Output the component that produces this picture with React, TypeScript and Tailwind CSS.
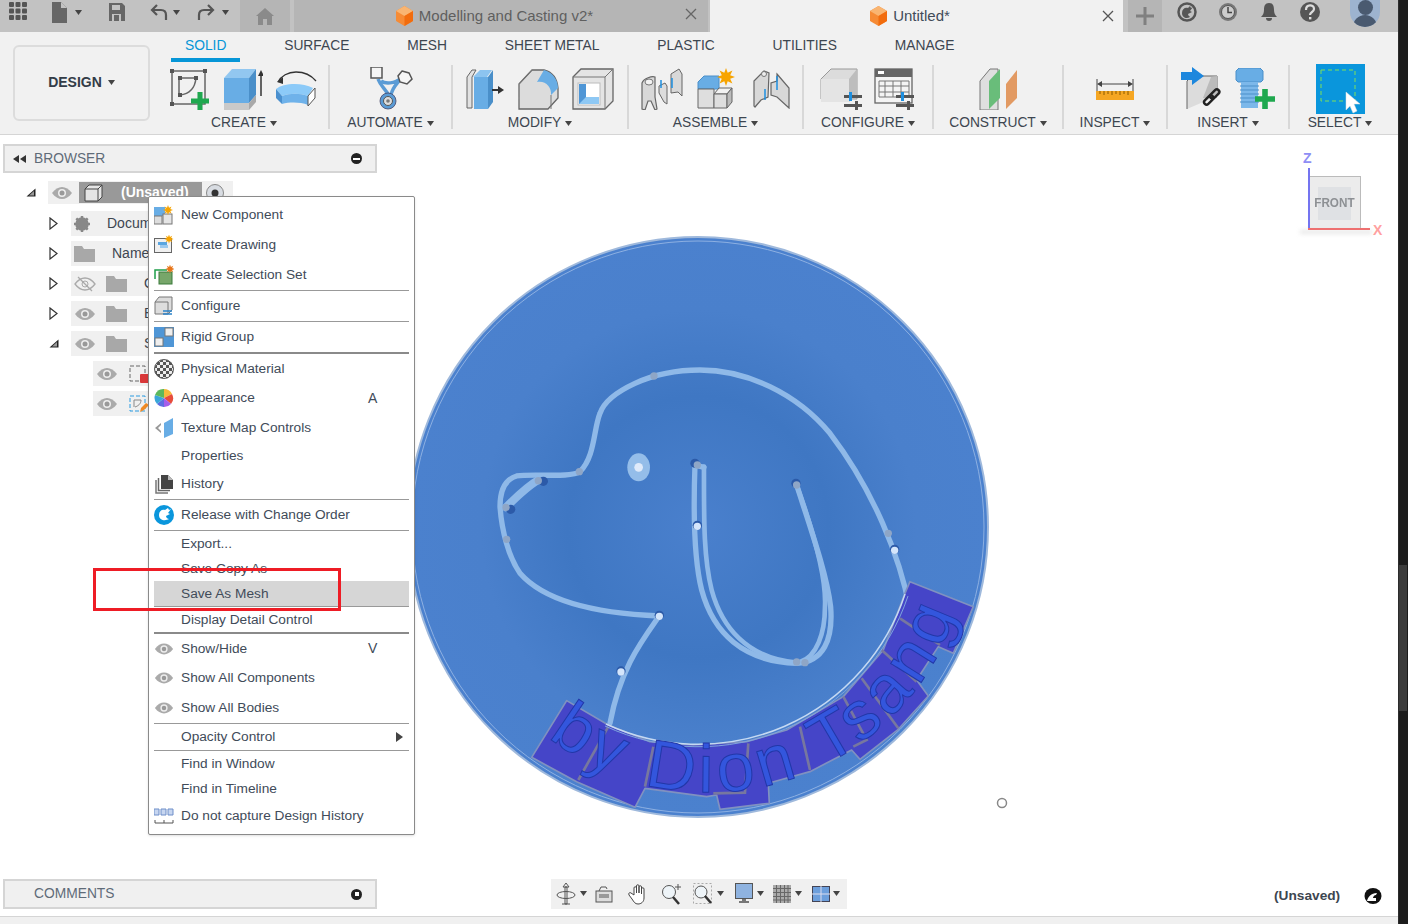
import React from 'react';

const Caret = ({ className = 'ml-1' }: { className?: string }) => (
  <svg width="7" height="5" viewBox="0 0 7 5" className={className}>
    <path d="M0 0h7L3.5 5z" fill="#444" />
  </svg>
);

const Eye = ({ className = '' }: { className?: string }) => (
  <svg width="22" height="14" viewBox="0 0 22 14" className={className}>
    <path d="M1 7c3-4 6.500-6 10-6s7 2 10 6c-3 4-6.500 6-10 6S4 11 1 7z" fill="#aaa" />
    <circle cx="11" cy="7" r="4" fill="#eee" />
    <circle cx="11" cy="7" r="2.500" fill="#999" />
  </svg>
);

const Folder = () => (
  <svg width="21" height="16" viewBox="0 0 21 16" className="flex-none">
    <path d="M0 0h8l2 3h11v13H0z" fill="#a8a8a8" />
  </svg>
);

const OrangeCube = () => (
  <svg width="19" height="20" viewBox="0 0 19 20">
    <path d="M9.500 0L18 5v10l-8.500 5L1 15V5z" fill="#f68b35" />
    <path d="M9.500 0L18 5l-8.500 5L1 5z" fill="#f9b572" />
    <path d="M9.500 10L18 5v10l-8.500 5z" fill="#f26c0d" />
  </svg>
);

const Spark = ({ x, y, r, fill = '#f7a400' }: { x: number; y: number; r: number; fill?: string }) => {
  const pts: string[] = [];
  for (let i = 0; i < 16; i++) {
    const rad = i % 2 === 0 ? r : r * 0.5;
    const a = (i * Math.PI) / 8;
    pts.push(`${(x + rad * Math.cos(a)).toFixed(1)},${(y + rad * Math.sin(a)).toFixed(1)}`);
  }
  return <polygon points={pts.join(' ')} fill={fill} />;
};

const GreenPlus = ({ x, y, s = 18 }: { x: number; y: number; s?: number }) => (
  <path
    d={`M${x} ${y + s * 0.36}h${s * 0.36}v${-s * 0.36}h${s * 0.28}v${s * 0.36}h${s * 0.36}v${s * 0.28}h${-s * 0.36}v${s * 0.36}h${-s * 0.28}v${-s * 0.36}h${-s * 0.36}z`}
    fill="#1fa84f"
  />
);

const Sliders = ({ x, y }: { x: number; y: number }) => (
  <g>
    <rect x={x} y={y + 3} width="18" height="3" fill="#555" />
    <rect x={x} y={y + 12} width="18" height="3" fill="#555" />
    <rect x={x + 5} y={y} width="3" height="9" fill="#1d8fe0" />
    <rect x={x + 11} y={y + 9} width="3" height="9" fill="#555" />
  </g>
);

/* ribbon icons */
const SketchIcon = () => (
  <svg width="42" height="42" viewBox="0 0 42 42">
    <rect x="3" y="3" width="33" height="33" fill="none" stroke="#666" strokeWidth="1.500" />
    {[[1, 1], [34, 1], [1, 34]].map(([a, b]) => (
      <rect key={a * 100 + b} x={a} y={b} width="4" height="4" fill="#555" />
    ))}
    <path d="M10 10h16M10 10v17M11 27c9-1 15-7 16-17" fill="none" stroke="#666" strokeWidth="1.500" />
    <rect x="9" y="8" width="4" height="4" fill="#555" />
    <rect x="25" y="8" width="4" height="4" fill="#555" />
    <rect x="9" y="25" width="4" height="4" fill="#555" />
    <GreenPlus x={22} y={24} />
  </svg>
);

const ExtrudeIcon = () => (
  <svg width="40" height="42" viewBox="0 0 40 42">
    <path d="M1 10L9 1h24l-7 9z" fill="#92c7f0" />
    <path d="M1 10h25v25H1z" fill="#68ade5" />
    <path d="M26 10l7-9v26l-7 8z" fill="#4a8fc9" />
    <path d="M1 35h25v7H1z" fill="#c9c9c9" />
    <path d="M26 35l7-8v7l-7 8z" fill="#a9a9a9" />
    <path d="M38 28V5" stroke="#333" strokeWidth="1.500" />
    <path d="M35 8l3-6 3 6z" fill="#333" />
  </svg>
);

const RevolveIcon = () => (
  <svg width="44" height="42" viewBox="0 0 44 42">
    <path d="M3 14c3-6 10-10 18-10s15 3 20 9" fill="none" stroke="#333" strokeWidth="1.300" />
    <path d="M2 14l6-5v7z" fill="#333" />
    <path d="M1 21c7-6 26-7 37-1l-5 8c-8-3-18-3-26 0z" fill="#8ccaf8" />
    <path d="M1 21l6 7v8l-6-6z" fill="#4a90cf" />
    <path d="M7 28c8-3 18-3 26 0v9c-8-3-18-3-26-1z" fill="#6fb2ea" />
    <path d="M33 28l7-8v10l-7 8z" fill="#fff" stroke="#555" />
  </svg>
);

const AutomateIcon = () => (
  <svg width="44" height="44" viewBox="0 0 44 44">
    <path d="M9 12c3 8 8 10 11 17M33 9c-3 7-9 9-11 19M12 14c4 3 14 3 20-3" fill="none" stroke="#5a9bd5" strokeWidth="3.500" />
    <rect x="2" y="0" width="11" height="11" fill="#f5f5f5" stroke="#555" strokeWidth="1.500" />
    <path d="M33 4l7 2 3 6-5 5-7-2-2-6z" fill="#f5f5f5" stroke="#555" strokeWidth="1.500" />
    <circle cx="19" cy="34" r="8" fill="#5a9bd5" stroke="#446" strokeWidth=".8" />
    <circle cx="19" cy="34" r="4.500" fill="#ddd" stroke="#555" />
    <circle cx="19" cy="34" r="1.800" fill="#777" />
  </svg>
);

const PressPullIcon = () => (
  <svg width="40" height="42" viewBox="0 0 40 42">
    <path d="M1 9l5-7h4L6 9v31H1z" fill="#e2e2e2" stroke="#666" />
    <path d="M7 9l7-7h12l-5 7z" fill="#8cc4f0" />
    <path d="M8 9h14v32H8z" fill="#68ade5" />
    <path d="M22 9l5-7v32l-5 7z" fill="#4a8fc9" />
    <path d="M26 22h8" stroke="#333" strokeWidth="2" />
    <path d="M32 18l6 4-6 4z" fill="#333" />
  </svg>
);

const FilletIcon = () => (
  <svg width="42" height="42" viewBox="0 0 42 42">
    <path d="M1 16L14 2h12c8 2 13 8 14 18v10l-10 11H1z" fill="#dcdcdc" stroke="#666" strokeWidth="1.300" />
    <path d="M19 14c8-2 15 5 14 13l7-7c0-9-6-16-14-18z" fill="#68ade5" />
    <path d="M14 2L1 16M33 27v14" stroke="#777" />
  </svg>
);

const ShellIcon = () => (
  <svg width="42" height="42" viewBox="0 0 42 42">
    <path d="M1 9l8-8h32v32l-8 8H1z" fill="#e4e4e4" stroke="#666" strokeWidth="1.300" />
    <path d="M33 9v32M33 9l8-8M33 9H1" stroke="#777" />
    <rect x="6" y="15" width="22" height="22" fill="#fff" stroke="#bbb" />
    <path d="M7 16h7v13h13v7H7z" fill="#4f96d6" />
    <path d="M14 29h13v7H7z" fill="#8ec8f4" />
  </svg>
);

const JointPart = ({ x, y }: { x: number; y: number }) => (
  <g transform={`translate(${x} ${y})`}>
    <path d="M1 8c2-5 10-7 13-6v20l2 12-2 1-4-9H7l-3 9-3-1z" fill="#d8d8d8" stroke="#666" strokeWidth="1.200" />
    <ellipse cx="8" cy="7" rx="4" ry="3" fill="#f2f2f2" stroke="#777" />
  </g>
);

const AsBuiltJointIcon = () => (
  <svg width="42" height="42" viewBox="0 0 42 42">
    <JointPart x={0} y={7} />
    <path d="M18 18l6-3 2 3v18l-3-2-5-9z" fill="#dcdcdc" stroke="#666" />
    <path d="M30 6l8-5 3 5v22l-4-4-7 1z" fill="#d8d8d8" stroke="#666" />
    <path d="M20 12v8M31 10v10" stroke="#1d8fe0" strokeWidth="1.500" />
  </svg>
);

const NewComponentIcon = () => (
  <svg width="42" height="42" viewBox="0 0 42 42">
    <path d="M1 14l6-6h15v13H1z" fill="#68ade5" stroke="#4a8fc9" />
    <path d="M1 21h16v19H1z" fill="#dedede" stroke="#666" />
    <path d="M17 26l5-6h13l-5 6z" fill="#f2f2f2" stroke="#666" />
    <path d="M17 26h13v14H17z" fill="#dedede" stroke="#666" />
    <path d="M30 26l5-6v14l-5 6z" fill="#bbb" stroke="#666" />
    <Spark x={29} y={9} r={9} />
  </svg>
);

const JointIcon = () => (
  <svg width="38" height="40" viewBox="0 0 38 40">
    <path d="M1 12L11 2l5 2-1 24-7 3-6 7-1-1z" fill="#d8d8d8" stroke="#666" strokeWidth="1.200" />
    <circle cx="11" cy="5" r="2.500" fill="#eee" stroke="#777" />
    <path d="M24 5l12 14v20l-12-11-6-2V14l6-2z" fill="#d8d8d8" stroke="#666" strokeWidth="1.200" />
    <path d="M12 20v11M24 7v14" stroke="#1d8fe0" strokeWidth="1.500" />
  </svg>
);

const ConfigCubeIcon = () => (
  <svg width="42" height="42" viewBox="0 0 42 42">
    <path d="M1 11l10-10h26v30H1z" fill="#dcdcdc" stroke="#999" />
    <path d="M1 11h28v23H1z" fill="#e4e4e4" />
    <path d="M29 11l8-10v24l-8 9z" fill="#bdbdbd" />
    <Sliders x={24} y={24} />
  </svg>
);

const ConfigTableIcon = () => (
  <svg width="42" height="42" viewBox="0 0 42 42">
    <rect x="1" y="1" width="37" height="34" fill="#f4f4f4" stroke="#666" strokeWidth="1.300" />
    <rect x="1" y="1" width="37" height="8" fill="#666" />
    <rect x="4" y="3" width="6" height="3" fill="#fff" />
    <path d="M5 13h30v16H5zM5 18h30M5 24h30M11 13v16M19 13v16M27 13v16" fill="none" stroke="#777" />
    <Sliders x={22} y={24} />
  </svg>
);

const ConstructIcon = () => (
  <svg width="38" height="42" viewBox="0 0 38 42">
    <path d="M1 13L11 1h8v41H1z" fill="#dfdfdf" stroke="#777" />
    <path d="M10 13L21 1v29L10 41z" fill="#69bd7a" />
    <path d="M27 16L38 2v28L27 41z" fill="#e29a63" />
  </svg>
);

const InspectIcon = () => (
  <svg width="38" height="22" viewBox="0 0 38 22">
    <path d="M1 1v12M37 1v12" stroke="#444" />
    <path d="M3 6h32" stroke="#444" />
    <path d="M1 6l5-3v6zM37 6l-5-3v6z" fill="#444" />
    <rect x="0" y="13" width="38" height="9" fill="#f5a623" />
    <path d="M4 13v3M8 13v4M12 13v3M16 13v4M20 13v3M24 13v4M28 13v3M32 13v4" stroke="#8a5a00" />
  </svg>
);

const InsertIcon = () => (
  <svg width="42" height="44" viewBox="0 0 42 44">
    <path d="M6 42V14l5-5h25v20" fill="#dcdcdc" stroke="#666" />
    <path d="M30 10l6-1v22H22" fill="#bbb" />
    <path d="M0 5h11V0l12 9-12 9v-5H0z" fill="#1d87dd" />
    <rect x="22" y="31" width="11" height="5" rx="2.500" transform="rotate(-45 27 33)" fill="none" stroke="#222" strokeWidth="2.400" />
    <rect x="28" y="25" width="11" height="5" rx="2.500" transform="rotate(-45 33 27)" fill="none" stroke="#222" strokeWidth="2.400" />
  </svg>
);

const BoltIcon = () => (
  <svg width="40" height="42" viewBox="0 0 40 42">
    <path d="M1 3l3-3h21l3 3v9l-2 2H3l-2-2z" fill="#68ade5" stroke="#4a8fc9" />
    <path d="M6 14h17v26H6z" fill="#7cb8ea" />
    <path d="M5 18h19M5 22h19M5 26h19M5 30h19M5 34h19" stroke="#4a8fc9" />
    <GreenPlus x={20} y={21} s={20} />
  </svg>
);

const SelectIcon = () => (
  <svg width="49" height="50" viewBox="0 0 49 50">
    <rect width="49" height="50" fill="#0a96dc" />
    <rect x="5" y="6" width="34" height="31" fill="none" stroke="#7ee05a" strokeDasharray="4 3" />
    <path d="M30 28l0 18 4-4 3 7 4-2-3-7h6z" fill="#fff" stroke="#ddd" strokeWidth=".5" />
  </svg>
);

const ribbonTabs = ['SOLID', 'SURFACE', 'MESH', 'SHEET METAL', 'PLASTIC', 'UTILITIES', 'MANAGE'];

const RibbonGroup = ({
  label,
  width,
  gap = 'gap-[12px]',
  children,
  last,
}: {
  label: string;
  width: string;
  gap?: string;
  children: React.ReactNode;
  last?: boolean;
}) => (
  <div className={`${width} h-[64px] flex flex-col items-center ${last ? '' : 'border-r-2 border-[#d8d8d8]'}`}>
    <div className={`h-[47px] flex-none flex items-center justify-center ${gap}`}>{children}</div>
    <div className="mt-[1px] flex-none flex items-center text-[13.8px] leading-[18px] text-[#3d4650] pt-px">
      {label}
      <Caret />
    </div>
  </div>
);

/* context menu icons */
const MenuCube = () => (
  <svg width="20" height="20" viewBox="0 0 20 20">
    <path d="M1 6l4-5h13v13l-4 4H1z" fill="#ddd" stroke="#777" />
    <path d="M1 6h13v12" fill="none" stroke="#777" />
    <path d="M9 15h9M9 18h9" stroke="#2a83c9" strokeWidth="1.300" />
  </svg>
);

const menuIcons: Record<string, React.ReactNode> = {
  component: (
    <svg width="20" height="20" viewBox="0 0 20 20">
      <rect x="0" y="2" width="11" height="9" fill="#68ade5" />
      <rect x="0" y="11" width="8" height="8" fill="#ddd" stroke="#777" />
      <rect x="9" y="9" width="9" height="10" fill="#e5e5e5" stroke="#777" />
      <Spark x={14} y={5} r={5} />
    </svg>
  ),
  drawing: (
    <svg width="20" height="20" viewBox="0 0 20 20">
      <rect x="0.500" y="3.500" width="17" height="14" fill="#f0f0f0" stroke="#666" />
      <rect x="4" y="7" width="9" height="3" fill="#5aa5e0" />
      <rect x="6" y="10" width="8" height="3" fill="#9cc9ee" />
      <Spark x={15} y={4} r={4.500} />
    </svg>
  ),
  selection: (
    <svg width="20" height="20" viewBox="0 0 20 20">
      <path d="M1 14V5h12" fill="none" stroke="#1e9e4a" strokeWidth="1.500" />
      <rect x="5" y="7" width="13" height="12" fill="#77a66a" stroke="#3b7a3b" />
      <Spark x={16} y={4} r={4.500} fill="#e8761a" />
    </svg>
  ),
  configure: <MenuCube />,
  rigid: (
    <svg width="20" height="20" viewBox="0 0 20 20">
      <rect width="20" height="20" fill="#4f96d6" />
      <rect x="11" y="1" width="8" height="8" fill="#eee" stroke="#777" />
      <rect x="1" y="11" width="8" height="8" fill="#eee" stroke="#777" />
    </svg>
  ),
  material: (
    <svg width="20" height="20" viewBox="0 0 20 20">
      <defs>
        <pattern id="checker" width="6" height="6" patternUnits="userSpaceOnUse">
          <rect width="6" height="6" fill="#eee" />
          <rect width="3" height="3" fill="#555" />
          <rect x="3" y="3" width="3" height="3" fill="#555" />
        </pattern>
      </defs>
      <circle cx="10" cy="10" r="9.500" fill="url(#checker)" stroke="#555" />
    </svg>
  ),
  appearance: (
    <svg width="20" height="20" viewBox="0 0 20 20">
      <path d="M10 10V1a9 9 0 0 1 8 5z" fill="#f6b93b" />
      <path d="M10 10l8-4a9 9 0 0 1-1 10z" fill="#e74c3c" />
      <path d="M10 10l7 6a9 9 0 0 1-7 3z" fill="#a55eea" />
      <path d="M10 10v9a9 9 0 0 1-7-3z" fill="#5b6ee1" />
      <path d="M10 10l-7 6a9 9 0 0 1-2-9z" fill="#3aa6d9" />
      <path d="M10 10L1 7a9 9 0 0 1 9-6z" fill="#5cb85c" />
    </svg>
  ),
  texture: (
    <svg width="20" height="20" viewBox="0 0 20 20">
      <path d="M1 10l6-5v2L4 10l3 3v2z" fill="#999" />
      <path d="M10 5l9-5v16l-9 4z" fill="#68ade5" />
    </svg>
  ),
  history: (
    <svg width="20" height="20" viewBox="0 0 20 20">
      <path d="M2 6v13h12" fill="none" stroke="#777" strokeWidth="1.500" />
      <path d="M4.500 4v12.500H16" fill="none" stroke="#666" strokeWidth="1.500" />
      <path d="M7 1h7l5 5v9H7z" fill="#444" />
      <path d="M14 1v5h5z" fill="#bbb" />
    </svg>
  ),
  release: (
    <svg width="20" height="20" viewBox="0 0 20 20">
      <circle cx="10" cy="10" r="10" fill="#0a96dc" />
      <path d="M5 10c0-4 3-6 6-5l3-2 1 2 2-1-3 4 2 1-4 2c0 2 2 3 3 3-3 2-10 2-10-4z" fill="#fff" />
    </svg>
  ),
  eye: <Eye className="w-[20px]" />,
  capture: (
    <svg width="20" height="18" viewBox="0 0 20 18">
      <path d="M0 2h5v6H0zM7 2h5v6H7zM14 2h5v6h-5z" fill="#c7d6f0" stroke="#6f8fc9" />
      <path d="M1 13v3h18v-3M10 13v3" fill="none" stroke="#555" />
    </svg>
  ),
};

type MenuEntry =
  | { kind: 'sep'; thick?: boolean }
  | { label: string; height: string; icon?: string; shortcut?: string; submenu?: boolean; active?: boolean; kind?: 'item' };

const menuEntries: MenuEntry[] = [
  { label: 'New Component', height: 'h-[30px]', icon: 'component' },
  { label: 'Create Drawing', height: 'h-[30px]', icon: 'drawing' },
  { label: 'Create Selection Set', height: 'h-[30px]', icon: 'selection' },
  { kind: 'sep' },
  { label: 'Configure', height: 'h-[30px]', icon: 'configure' },
  { kind: 'sep' },
  { label: 'Rigid Group', height: 'h-[30px]', icon: 'rigid' },
  { kind: 'sep', thick: true },
  { label: 'Physical Material', height: 'h-[29px]', icon: 'material' },
  { label: 'Appearance', height: 'h-[30px]', icon: 'appearance', shortcut: 'A' },
  { label: 'Texture Map Controls', height: 'h-[30px]', icon: 'texture' },
  { label: 'Properties', height: 'h-[26px]' },
  { label: 'History', height: 'h-[30px]', icon: 'history' },
  { kind: 'sep' },
  { label: 'Release with Change Order', height: 'h-[30px]', icon: 'release' },
  { kind: 'sep' },
  { label: 'Export...', height: 'h-[25px]' },
  { label: 'Save Copy As', height: 'h-[25px]' },
  { label: 'Save As Mesh', height: 'h-[25px]', active: true },
  { kind: 'sep' },
  { label: 'Display Detail Control', height: 'h-[25px]' },
  { kind: 'sep', thick: true },
  { label: 'Show/Hide', height: 'h-[29px]', icon: 'eye', shortcut: 'V' },
  { label: 'Show All Components', height: 'h-[30px]', icon: 'eye' },
  { label: 'Show All Bodies', height: 'h-[30px]', icon: 'eye' },
  { kind: 'sep' },
  { label: 'Opacity Control', height: 'h-[26px]', submenu: true },
  { kind: 'sep' },
  { label: 'Find in Window', height: 'h-[25px]' },
  { label: 'Find in Timeline', height: 'h-[25px]' },
  { label: 'Do not capture Design History', height: 'h-[30px]', icon: 'capture' },
];

const ContextMenu = () => (
  <div className="absolute left-[148px] top-[61px] w-[267px] h-[639px] z-10 bg-white border border-[#8a8a8a] rounded-[2px] px-[5px] pt-[3px] shadow-sm">
    {menuEntries.map((entry, i) => {
      if (entry.kind === 'sep') {
        return <div key={i} className={entry.thick ? 'h-[2px] bg-[#8a8a8a]' : 'h-px bg-[#999]'} />;
      }
      const item = entry as Exclude<MenuEntry, { kind: 'sep' }>;
      return (
        <div
          key={i}
          className={`${item.height} flex items-center text-[13.7px] text-[#414b59] ${item.active ? 'bg-[#d6d6d6]' : ''}`}
        >
          <span className="w-[27px] flex-none flex items-center">{item.icon ? menuIcons[item.icon] : null}</span>
          <span className="flex-1 pt-px">{item.label}</span>
          {item.shortcut && <span className="w-[41px] flex-none text-[14px]">{item.shortcut}</span>}
          {item.submenu && (
            <svg width="7" height="10" viewBox="0 0 7 10" className="mr-[6px]">
              <path d="M0 0l7 5-7 5z" fill="#444" />
            </svg>
          )}
        </div>
      );
    })}
  </div>
);

const Triangle = ({ open }: { open?: boolean }) =>
  open ? (
    <svg width="10" height="9" viewBox="0 0 10 9">
      <path d="M9.500 0.500v8H0.500z" fill="#222" />
      <path d="M8 3v4.500H3z" fill="#999" />
    </svg>
  ) : (
    <svg width="9" height="13" viewBox="0 0 9 13">
      <path d="M1 1l7 5.500L1 12z" fill="#fff" stroke="#333" strokeWidth="1.200" />
    </svg>
  );

const PanelHeader = ({
  title,
  height,
  children,
  symbol,
}: {
  title: string;
  height: string;
  children?: React.ReactNode;
  symbol: string;
}) => (
  <div className={`w-[374px] ${height} flex-none flex items-center bg-[#f0f0f0] border-2 border-[#d5d5d5] text-[13.8px] text-[#5f6b78]`}>
    <span className="w-[29px] flex justify-center">{children}</span>
    <span className="flex-1 pt-px">{title}</span>
    <span className="w-[11px] h-[11px] mr-[13px] rounded-full bg-[#222] flex items-center justify-center">
      <span className={symbol} />
    </span>
  </div>
);

const TreeRow = ({ open, children }: { open?: boolean; children: React.ReactNode }) => (
  <div className="h-[25px] flex items-center mb-[5px] ml-[46px]">
    <span className="w-[22px] flex-none">
      <Triangle open={open} />
    </span>
    <div className="w-[79px] h-[25px] flex items-center bg-[#f0f0f0] overflow-hidden whitespace-nowrap">{children}</div>
  </div>
);

const BrowserTree = () => (
  <div className="mt-[8px] text-[14px] text-[#3d4650]">
    <div className="h-[23px] flex items-center ml-[23px] mb-[7px]">
      <span className="w-[22px] flex-none">
        <Triangle open />
      </span>
      <div className="h-[23px] w-[185px] flex items-center bg-[#f0f0f0]">
        <Eye className="ml-[3px] mr-[6px]" />
        <div className="w-[123px] h-[21px] flex items-center bg-[#999] text-white font-bold">
          <svg width="20" height="18" viewBox="0 0 20 18" className="ml-[5px] mr-[17px]">
            <path d="M1 5l4-4h13v12l-4 4H1z" fill="#e5e5e5" stroke="#444" />
            <path d="M1 5h13v12M14 5l4-4" fill="none" stroke="#444" />
          </svg>
          (Unsaved)
        </div>
        <svg width="20" height="20" viewBox="0 0 20 20" className="ml-[3px]">
          <circle cx="10" cy="10" r="8.500" fill="#d8dce2" stroke="#888" />
          <circle cx="10" cy="10" r="3.500" fill="#333" />
        </svg>
      </div>
    </div>
    <TreeRow>
      <svg width="16" height="16" viewBox="0 0 16 16" className="ml-[3px] mr-[17px] flex-none">
        <circle cx="8" cy="8" r="5" fill="none" stroke="#888" strokeWidth="3.500" />
        <path d="M8 0v16M0 8h16M2.300 2.300l11.400 11.400M13.700 2.300L2.300 13.700" stroke="#888" strokeWidth="2.500" />
      </svg>
      Document Settings
    </TreeRow>
    <TreeRow>
      <span className="ml-[3px] mr-[17px]">
        <Folder />
      </span>
      Named Views
    </TreeRow>
    <TreeRow>
      <svg width="22" height="16" viewBox="0 0 22 16" className="ml-[3px] mr-[10px] flex-none">
        <path d="M1 8c3-4 6.500-6 10-6s7 2 10 6c-3 4-6.500 6-10 6S4 12 1 8z" fill="none" stroke="#aaa" strokeWidth="1.300" />
        <circle cx="11" cy="8" r="3" fill="none" stroke="#aaa" />
        <path d="M4 1l14 14" stroke="#aaa" strokeWidth="1.300" />
      </svg>
      <Folder />
      <span className="ml-[17px]">Origin</span>
    </TreeRow>
    <TreeRow>
      <Eye className="ml-[3px] mr-[10px] flex-none" />
      <Folder />
      <span className="ml-[17px]">Bodies</span>
    </TreeRow>
    <TreeRow open>
      <Eye className="ml-[3px] mr-[10px] flex-none" />
      <Folder />
      <span className="ml-[17px]">Sketches</span>
    </TreeRow>
    <div className="h-[25px] w-[55px] flex items-center mb-[5px] ml-[90px] bg-[#f0f0f0] overflow-hidden">
      <Eye className="ml-[3px] mr-[10px] flex-none" />
      <svg width="22" height="20" viewBox="0 0 22 20" className="flex-none">
        <rect x="2" y="2" width="15" height="15" fill="none" stroke="#666" strokeDasharray="4 2" />
        <rect x="12" y="10" width="9" height="9" rx="1" fill="#d9383a" />
      </svg>
    </div>
    <div className="h-[25px] w-[55px] flex items-center ml-[90px] bg-[#f0f0f0] overflow-hidden">
      <Eye className="ml-[3px] mr-[10px] flex-none" />
      <svg width="22" height="20" viewBox="0 0 22 20" className="flex-none">
        <rect x="2" y="2" width="15" height="15" fill="none" stroke="#2a9be0" strokeDasharray="4 2" />
        <path d="M6 6h7M6 6v7M7 13c3-1 6-3 6-7" fill="none" stroke="#888" />
        <path d="M12 18l1-4 5-5 3 2-5 5z" fill="#f08a24" />
      </svg>
    </div>
  </div>
);

/* the model drawn in the canvas, page coordinates */
const Model = () => (
  <svg className="absolute inset-0" width="1398" height="781" viewBox="0 135 1398 781">
    <defs>
      <radialGradient id="disc" cx="50%" cy="50%" r="50%">
        <stop offset="0%" stopColor="#4a80cd" />
        <stop offset="45%" stopColor="#3f77c3" />
        <stop offset="75%" stopColor="#4a80cc" />
        <stop offset="100%" stopColor="#4b81ce" />
      </radialGradient>
      <path id="nameArc" d="M548 737A260 260 0 0 0 963 585" fill="none" />
    </defs>
    <circle cx="698" cy="527" r="290" fill="url(#disc)" stroke="#9fb9dc" strokeWidth="2" />
    <circle cx="698" cy="527" r="286" fill="none" stroke="#8db0e2" strokeWidth="1" />

    <g transform="translate(480 350) scale(.3333)" fill="none" stroke="#8fb9e8" strokeWidth="16" strokeLinecap="round" strokeLinejoin="round">
      <path d="M1290 780C1260 620 1180 420 1050 250C950 130 800 60 660 60C590 60 520 75 465 100C400 130 370 160 360 190C340 240 345 320 300 365C270 385 160 370 110 378C70 390 60 430 60 470C65 540 85 620 120 670C190 750 330 790 538 798" />
      <path d="M538 798C480 880 420 960 390 1120" />
      <path d="M78 472C110 440 140 410 175 390" strokeWidth="24" />
      <path d="M645 345L672 352" />
      <path d="M645 345C640 480 640 620 665 720C700 850 790 935 950 940C1030 935 1060 870 1052 770C1040 670 990 530 950 405" />
      <path d="M672 350C672 500 670 620 695 720C725 830 800 925 950 938" strokeWidth="14" />
      <path d="M950 405C995 530 1040 680 1035 770C1035 850 1010 920 960 936" strokeWidth="14" />
      <ellipse cx="476" cy="352" rx="34" ry="42" fill="#94bde9" stroke="none" />
      <circle cx="476" cy="352" r="13" fill="#dfeafa" stroke="none" />
      {[[538, 798], [423, 965], [652, 528], [1244, 600]].map(([x, y]) => (
        <g key={x}>
          <circle cx={x} cy={y - 2} r="14" fill="#2c5aa8" stroke="none" />
          <circle cx={x} cy={y + 1} r="11" fill="#d4e5fb" stroke="none" />
        </g>
      ))}
      {[[645, 340], [948, 400], [190, 394], [92, 478]].map(([x, y]) => (
        <circle key={x} cx={x} cy={y} r="14" fill="#2c5aa8" stroke="none" />
      ))}
      {[[175, 392], [78, 472], [80, 568], [298, 365], [522, 78], [950, 405], [652, 345], [1225, 550], [950, 936], [975, 938]].map(([x, y]) => (
        <circle key={x + y} cx={x} cy={y} r="11" fill="#8fa6c6" stroke="none" />
      ))}
    </g>

    <g transform="translate(500 570) scale(.3333)">
      <polygon
        points="200,392 325,465 450,515 580,525 740,515 860,480 1030,380 1150,240 1215,70 1230,35 1420,110 1360,250 1315,230 1250,330 1285,378 1195,478 1080,568 1055,540 930,605 805,640 808,700 660,718 650,675 620,680 435,655 405,712 230,635 95,562"
        fill="#4545c8"
        stroke="#8091c0"
        strokeWidth="5"
        strokeLinejoin="round"
      />
      <g stroke="#77779f" strokeWidth="8" fill="none">
        <path d="M325 470L235 630M460 530L435 650M745 520L735 668L640 670M900 470L930 600M1030 380L1100 510L1060 530M1085 325L1195 475M1145 240L1250 335M1200 145L1320 225" />
      </g>
    </g>
    <path d="M606 724A218 218 0 0 0 905 594" fill="none" stroke="#c5d9f2" strokeWidth="1.500" />
    <path d="M605 726A221 221 0 0 0 908 596" fill="none" stroke="#7fa5dd" strokeWidth="1" />
    <text fontFamily="'Liberation Sans', Arial, sans-serif" fontSize="68" fill="#3356dd" stroke="#2237a8" strokeWidth="1">
      <textPath href="#nameArc" textLength="498">by Dion Tsang</textPath>
    </text>
    <circle cx="1002" cy="803" r="4.500" fill="#fff" stroke="#888" strokeWidth="1.500" />
  </svg>
);

const ViewCube = () => (
  <div className="absolute left-[1300px] top-[13px] w-[84px] h-[92px]">
    <span className="absolute left-[3px] top-0 text-[14px] font-bold text-[#8e8ef5]">Z</span>
    <div className="absolute left-[8px] top-[28px] w-[53px] h-[53px] bg-[#ececec] border-t border-r border-[#bbb] flex items-center justify-center">
      <div className="w-[33px] h-[33px] bg-[#dfe1e4] flex items-center justify-center">
        <span className="text-[13px] font-bold text-[#8d9094] scale-x-90">FRONT</span>
      </div>
    </div>
    <div className="absolute left-0 top-[82px] w-[72px] h-[4px] bg-[#e8e8e8] blur-[2px]" />
    <div className="absolute left-[8px] top-[20px] w-[2px] h-[61px] bg-[#7474f0]" />
    <div className="absolute left-[8px] top-[80px] w-[62px] h-[2px] bg-[#ee7070]" />
    <span className="absolute left-[73px] top-[72px] text-[14px] font-bold text-[#ffa0a0]">X</span>
  </div>
);

const NavBar = () => (
  <div className="w-[296px] h-[30px] flex items-center pl-[5px] bg-[#f0f0f0] mt-[-1px]">
    <svg width="20" height="24" viewBox="0 0 20 24" fill="none" stroke="#555">
      <path d="M10 1l-3 4h6zM9 5h2v17H9zM6 22h8" />
      <ellipse cx="10" cy="13" rx="9" ry="3.500" />
    </svg>
    <Caret className="ml-[4px] mr-[8px]" />
    <svg width="18" height="18" viewBox="0 0 18 18">
      <rect x="1" y="6" width="16" height="11" fill="#ddd" stroke="#555" />
      <rect x="4" y="9" width="10" height="4" fill="#999" />
      <path d="M4 6l2-4h5l1 2" fill="none" stroke="#555" />
    </svg>
    <svg width="22" height="22" viewBox="0 0 22 22" fill="#fff" stroke="#444" className="ml-[15px]">
      <path d="M6 12V5a1.200 1.200 0 0 1 2.500 0v5V3a1.200 1.200 0 0 1 2.500 0v7V4a1.200 1.200 0 0 1 2.500 0v7V6a1.200 1.200 0 0 1 2.500 0v9c0 4-3 6-6 6s-4-2-6-5l-3-4c-1-2 1-3 2-2z" />
    </svg>
    <svg width="22" height="22" viewBox="0 0 22 22" fill="none" className="ml-[10px]">
      <circle cx="9" cy="9" r="6.500" fill="#eef4f8" stroke="#555" />
      <path d="M13 14l6 7" stroke="#333" strokeWidth="2.500" />
      <path d="M18 1v6M15 4h6" stroke="#555" />
    </svg>
    <svg width="22" height="22" viewBox="0 0 22 22" fill="none" className="ml-[11px]">
      <rect x="0.500" y="0.500" width="18" height="20" stroke="#aaa" strokeDasharray="2 2" />
      <circle cx="8" cy="9" r="6" fill="#eef4f8" stroke="#555" />
      <path d="M12 13l6 7" stroke="#333" strokeWidth="2.500" />
    </svg>
    <Caret className="ml-[2px] mr-[11px]" />
    <svg width="18" height="21" viewBox="0 0 18 21">
      <rect x="0.500" y="0.500" width="17" height="15" fill="#8fb3e0" stroke="#555" />
      <path d="M7 16h4v2h3v2H4v-2h3z" fill="#777" />
    </svg>
    <Caret className="ml-[4px] mr-[9px]" />
    <svg width="18" height="18" viewBox="0 0 18 18">
      <rect width="18" height="18" fill="#aaa" />
      <path d="M3.500 0v18M7.500 0v18M11.500 0v18M15 0v18M0 3.500h18M0 7.500h18M0 11.500h18M0 15h18" stroke="#666" />
    </svg>
    <Caret className="ml-[4px] mr-[10px]" />
    <svg width="18" height="16" viewBox="0 0 18 16">
      <rect x="0.500" y="0.500" width="17" height="15" fill="#6d9fdc" stroke="#445" />
      <path d="M9 0v16M0 8h18" stroke="#dde" />
    </svg>
    <Caret className="ml-[3px]" />
  </div>
);

const TitleBar = () => (
  <div className="h-[32px] flex-none flex bg-[#c2c2c2]">
    <div className="flex items-start w-[240px] pl-[9px] pt-[2px]">
      <svg width="18" height="18" viewBox="0 0 18 18" fill="#555">
        {[0, 6.500, 13].map(a =>
          [0, 6.500, 13].map(b => <rect key={`${a}-${b}`} x={a} y={b} width="5" height="5" rx="1" />),
        )}
      </svg>
      <svg width="17" height="21" viewBox="0 0 17 21" className="ml-[24px]">
        <path d="M1 0h9l6 6v15H1z" fill="#666" />
        <path d="M10 0v6h6z" fill="#c2c2c2" />
      </svg>
      <Caret className="ml-[7px] mt-[8px]" />
      <svg width="17" height="18" viewBox="0 0 17 18" className="ml-[26px] mt-px">
        <path d="M1 0h13l3 3v15H1z" fill="#666" />
        <rect x="4" y="2" width="8" height="5" fill="#c2c2c2" />
        <rect x="4" y="11" width="9" height="7" fill="#c2c2c2" />
        <rect x="6" y="12" width="5" height="6" fill="#666" />
      </svg>
      <svg width="18" height="17" viewBox="0 0 18 17" fill="none" stroke="#555" strokeWidth="2.200" className="ml-[25px] mt-[2px]">
        <path d="M16 16V11c0-3-2-5-5-5H3" />
        <path d="M7 1L2 6l5 5" />
      </svg>
      <Caret className="ml-[5px] mt-[8px]" />
      <svg width="18" height="17" viewBox="0 0 18 17" fill="none" stroke="#555" strokeWidth="2.200" className="ml-[17px] mt-[2px]">
        <path d="M2 16V11c0-3 2-5 5-5h8" />
        <path d="M11 1l5 5-5 5" />
      </svg>
      <Caret className="ml-[7px] mt-[8px]" />
    </div>
    <div className="w-[50px] flex items-center justify-center bg-[#b5b5b5]">
      <svg width="18" height="18" viewBox="0 0 18 18">
        <path d="M9 1l9 8h-2v9h-5v-6H7v6H2V9H0z" fill="#8a8a8a" />
      </svg>
    </div>
    <div className="ml-[4px] w-[414px] relative flex items-center justify-center gap-[5px] bg-[#b5b5b5] text-[15px] text-[#5f5f5f] pr-[14px]">
      <OrangeCube />
      Modelling and Casting v2*
      <span className="absolute left-[391px] top-[8px] text-[#666]">
        <svg width="12" height="12" viewBox="0 0 12 12" stroke="currentColor" strokeWidth="1.300">
          <path d="M1 1l10 10M11 1L1 11" />
        </svg>
      </span>
    </div>
    <div className="ml-[2px] w-[413px] relative flex items-center justify-center gap-[5px] bg-[#f1f1f1] text-[15px] text-[#414b59] pr-[14px]">
      <OrangeCube />
      Untitled*
      <span className="absolute left-[392px] top-[10px] text-[#555]">
        <svg width="12" height="12" viewBox="0 0 12 12" stroke="currentColor" strokeWidth="1.300">
          <path d="M1 1l10 10M11 1L1 11" />
        </svg>
      </span>
    </div>
    <div className="ml-[5px] w-[34px] flex items-center justify-center bg-[#b5b5b5]">
      <svg width="18" height="18" viewBox="0 0 18 18">
        <path d="M7.500 0h3v7.500H18v3h-7.500V18h-3v-7.500H0v-3h7.500z" fill="#808080" />
      </svg>
    </div>
    <div className="flex-1 flex items-start pt-[2px] pl-[15px] relative">
      <svg width="20" height="20" viewBox="0 0 20 20">
        <circle cx="10" cy="10" r="8.500" fill="#c2c2c2" stroke="#555" strokeWidth="2.500" />
        <path d="M5 11c0-4 3-6 6-5l2-2 1 2 2-1-3 4 2 1-4 2c0 2 2 2 2 3-3 2-8 1-8-4z" fill="#555" />
      </svg>
      <svg width="20" height="20" viewBox="0 0 20 20" className="ml-[21px]">
        <circle cx="10" cy="10" r="9" fill="#777" />
        <circle cx="10" cy="10" r="6.500" fill="#ccc" stroke="#555" />
        <path d="M10 5v5.500h4" fill="none" stroke="#444" strokeWidth="1.500" />
      </svg>
      <svg width="18" height="20" viewBox="0 0 18 20" className="ml-[22px]">
        <path d="M9 1c4 0 5 3 5 7 0 3 1 5 3 7H1c2-2 3-4 3-7 0-4 1-7 5-7z" fill="#555" />
        <path d="M6 16h6c0 2-1 3-3 3s-3-1-3-3z" fill="#555" />
      </svg>
      <svg width="20" height="20" viewBox="0 0 20 20" className="ml-[22px]">
        <circle cx="10" cy="10" r="10" fill="#555" />
        <path d="M6 8c0-6 8-6 8-1 0 3-4 3-4 6" fill="none" stroke="#ddd" strokeWidth="2.200" />
        <rect x="9" y="15" width="2.400" height="2.400" fill="#ddd" />
      </svg>
      <div className="absolute left-[188px] top-0 w-[30px] h-[27px] rounded-b-full overflow-hidden bg-[#9db3cf]">
        <div className="mx-auto w-[15px] h-[15px] rounded-full bg-[#4a5a70]" />
        <div className="mx-auto w-[24px] h-[12px] rounded-t-full bg-[#4a5a70]" />
      </div>
    </div>
  </div>
);

const Ribbon = () => (
  <div className="h-[103px] flex-none flex bg-[#f1f1f1] border-b border-[#d5d5d5]">
    <div className="ml-[13px] mt-[13px] pb-[2px] w-[137px] h-[76px] flex items-center justify-center border-2 border-[#dcdcdc] rounded-[6px] text-[14px] font-bold text-[#333c47]">
      DESIGN
      <Caret className="ml-[6px]" />
    </div>
    <div className="ml-[10px] flex-1 flex flex-col">
      <div className="h-[30px] flex gap-[29.8px] pl-[11px] text-[13.8px] leading-[18px] text-[#3d4650]">
        {ribbonTabs.map(tab => (
          <div
            key={tab}
            className={`h-[30px] px-[14px] pt-[5px] border-b-4 ${tab === 'SOLID' ? 'text-[#0696d7] border-[#0696d7]' : 'border-transparent'}`}
          >
            {tab}
          </div>
        ))}
      </div>
      <div className="mt-[3px] flex">
        <RibbonGroup label="CREATE" width="w-[170px]">
          <SketchIcon />
          <ExtrudeIcon />
          <RevolveIcon />
        </RibbonGroup>
        <RibbonGroup label="AUTOMATE" width="w-[123px]">
          <AutomateIcon />
        </RibbonGroup>
        <RibbonGroup label="MODIFY" width="w-[176px]">
          <PressPullIcon />
          <FilletIcon />
          <ShellIcon />
        </RibbonGroup>
        <RibbonGroup label="ASSEMBLE" width="w-[175px]" gap="gap-[14px]">
          <AsBuiltJointIcon />
          <NewComponentIcon />
          <JointIcon />
        </RibbonGroup>
        <RibbonGroup label="CONFIGURE" width="w-[130px]">
          <ConfigCubeIcon />
          <ConfigTableIcon />
        </RibbonGroup>
        <RibbonGroup label="CONSTRUCT" width="w-[130px]">
          <ConstructIcon />
        </RibbonGroup>
        <RibbonGroup label="INSPECT" width="w-[104px]">
          <InspectIcon />
        </RibbonGroup>
        <RibbonGroup label="INSERT" width="w-[122px]">
          <InsertIcon />
          <BoltIcon />
        </RibbonGroup>
        <RibbonGroup label="SELECT" width="w-[100px]" last>
          <SelectIcon />
        </RibbonGroup>
      </div>
    </div>
  </div>
);

const App: React.FC = () => {
  return (
    <div className="w-[1408px] h-[924px] flex overflow-hidden bg-white font-['Liberation_Sans',Arial,sans-serif]">
      <div className="w-[1398px] flex flex-col">
        <TitleBar />
        <Ribbon />
        <div className="relative flex-1 flex flex-col pl-[3px] pt-[9px] pb-[7px]">
          <Model />
          <ViewCube />
          <div className="relative flex-1 flex flex-col">
            <PanelHeader title="BROWSER" height="h-[29px]" symbol="w-[7px] h-[2px] bg-white">
              <svg width="13" height="8" viewBox="0 0 13 8">
                <path d="M6 0v8L0 4zM13 0v8L7 4z" fill="#333" />
              </svg>
            </PanelHeader>
            <BrowserTree />
            <div className="mt-auto flex items-center">
              <PanelHeader title="COMMENTS" height="h-[30px]" symbol="w-[4px] h-[4px] bg-white" />
              <div className="ml-[174px]">
                <NavBar />
              </div>
              <span className="ml-[427px] mt-[4px] text-[13.7px] font-bold text-[#3d4650]">(Unsaved)</span>
              <svg width="18" height="16" viewBox="0 0 18 16" className="ml-[24px] mt-[4px]">
                <ellipse cx="9" cy="8" rx="8.500" ry="8" fill="#111" />
                <path d="M3 13c1-4 4-8 10-8l-1 2c-2 0-3 2-3 3h3v3z" fill="#fff" />
              </svg>
            </div>
          </div>
          <ContextMenu />
          <div className="absolute left-[93px] top-[433px] w-[248px] h-[43px] z-20 border-[3px] border-[#ee1c25]" />
        </div>
        <div className="h-[8px] flex-none bg-[#f0f0f0] border-t border-[#d5d5d5]" />
      </div>
      <div className="w-[10px] bg-[#1c1c1c] border-l border-[#2c2c2c] pt-[565px]">
        <div className="w-[8px] h-[146px] bg-[#3c3c3c]" />
      </div>
    </div>
  );
};

export default App;
